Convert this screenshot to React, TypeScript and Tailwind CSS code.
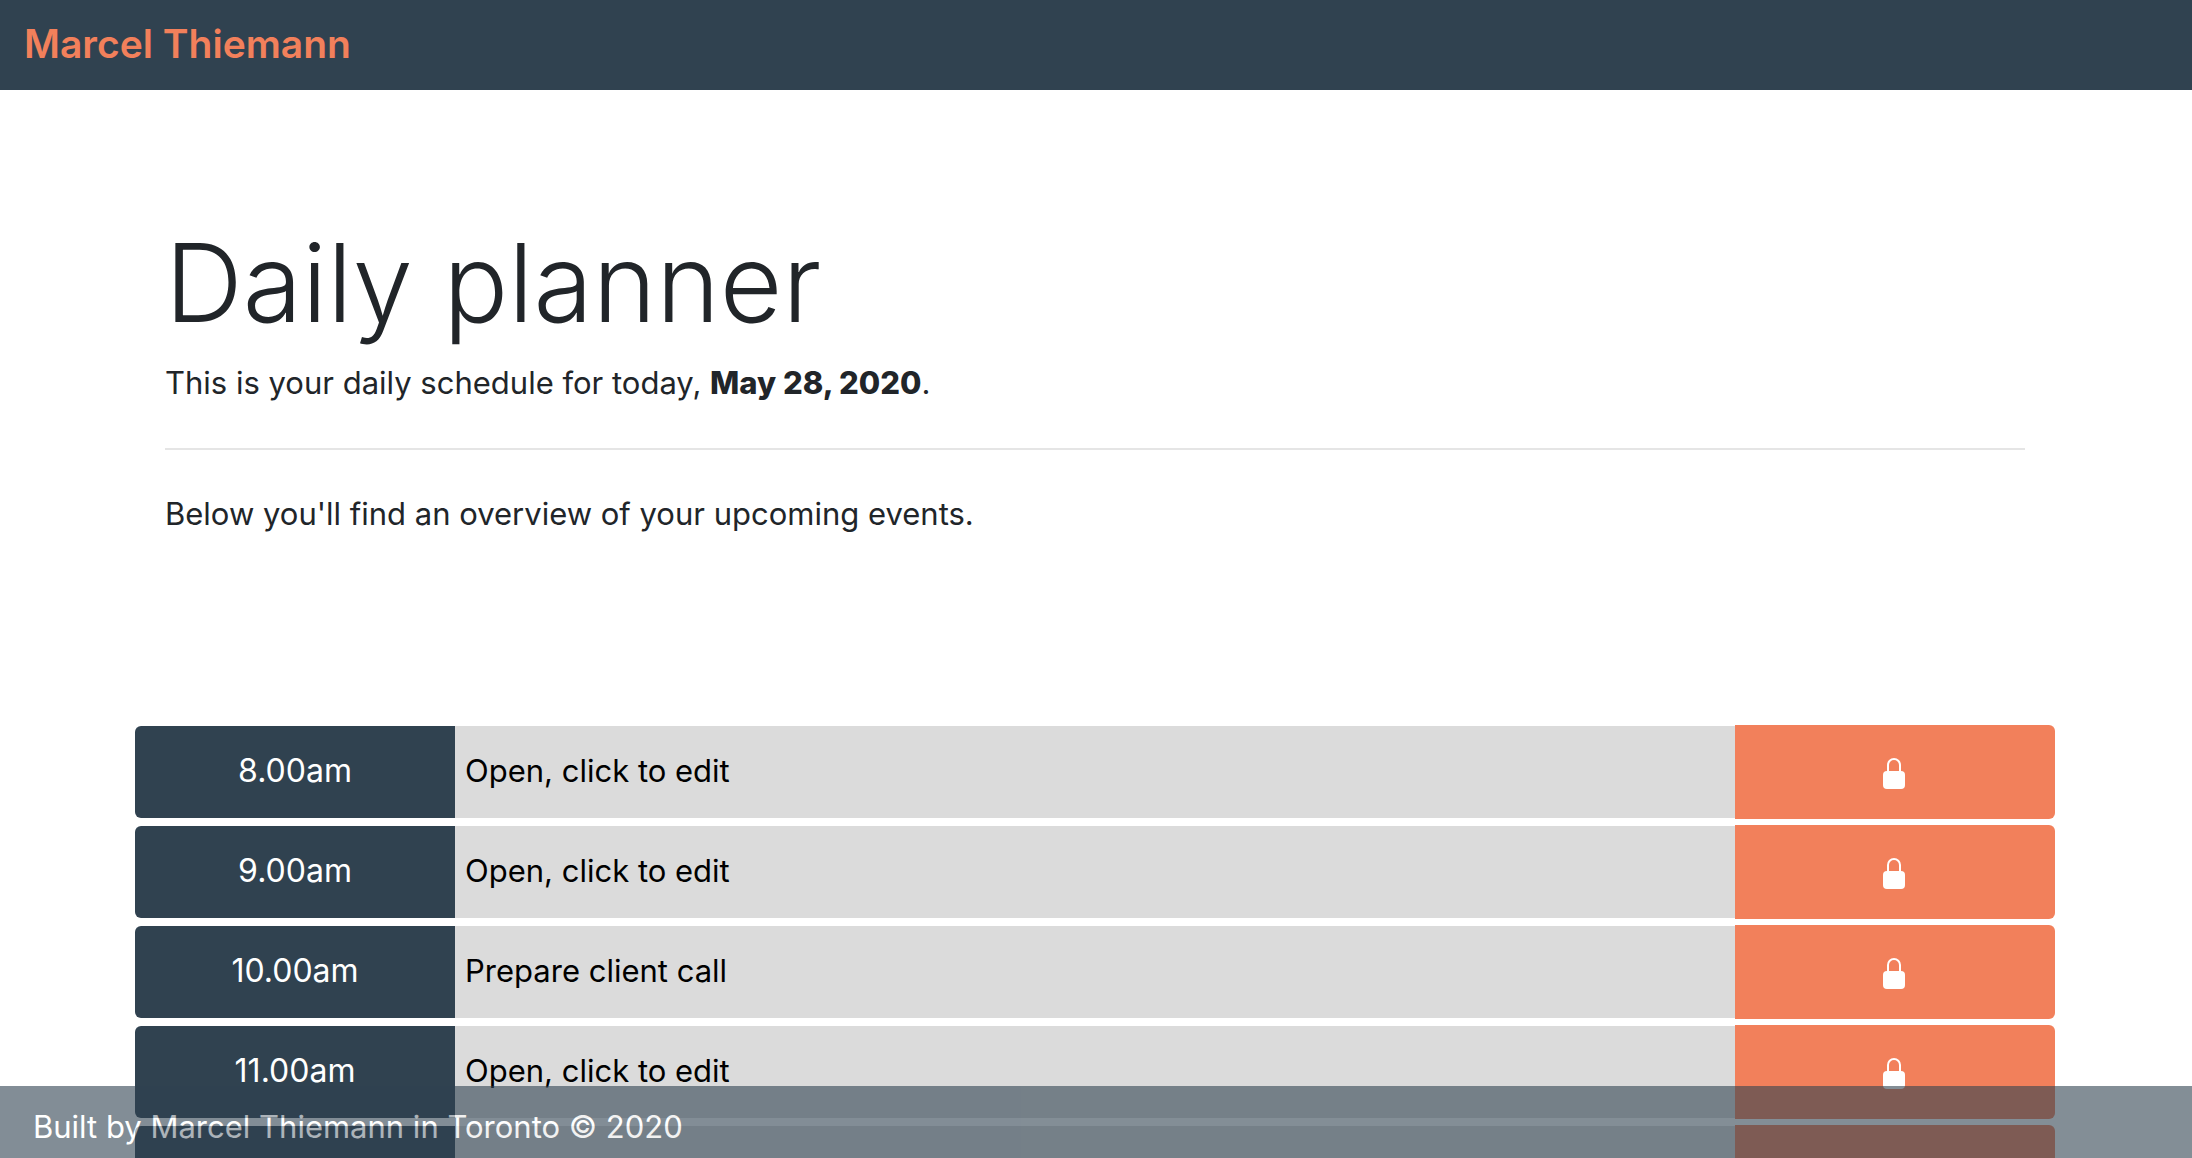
const slots = [
  { time: "8.00am", event: "Open, click to edit" },
  { time: "9.00am", event: "Open, click to edit" },
  { time: "10.00am", event: "Prepare client call" },
  { time: "11.00am", event: "Open, click to edit" },
  { time: "12.00pm", event: "Open, click to edit" },
];

function LockIcon() {
  return (
    <svg className="mt-1 h-8 w-6" viewBox="0 0 24 32" fill="none" aria-hidden="true">
      <path d="M5 15V7a6 6 0 0 1 12 0v8" stroke="white" strokeWidth="2" />
      <rect x="0" y="13" width="22" height="18" rx="4" fill="white" />
    </svg>
  );
}

function TimeSlot({ time, event }: { time: string; event: string }) {
  const id = `slot-${time}`;
  return (
    <div className="grid h-[92px] grid-cols-12">
      <label
        htmlFor={id}
        className="col-span-2 flex items-center justify-center rounded-l-md bg-[#304250] pb-0.5 text-[32px] text-white"
      >
        {time}
      </label>
      <input
        id={id}
        type="text"
        defaultValue={event}
        className="col-span-8 min-w-0 bg-[#dbdbdb] px-2.5 pb-0.5 text-black outline-none"
      />
      <button
        type="button"
        aria-label={`Save ${time}`}
        className="col-span-2 -my-px flex items-center justify-center rounded-r-md bg-[#f2805b]"
      >
        <LockIcon />
      </button>
    </div>
  );
}

export default function App() {
  return (
    <div className="h-screen overflow-hidden bg-white font-['Inter',sans-serif] text-[31px] leading-[48px] text-[#212529]">
      <nav className="flex h-[90px] items-center bg-[#304250] px-6 pb-0.5">
        <a href="#" className="text-[39px] font-semibold text-[#f2805b]">
          Marcel Thiemann
        </a>
      </nav>
      <main className="mx-auto max-w-[1922px] pr-0.5">
        <header className="px-[30px] pt-[126px] pb-[188px]">
          <h1 className="text-[108px] leading-[134px] font-light">Daily planner</h1>
          <p className="mt-[9px]">
            This is your daily schedule for today, <strong className="font-extrabold">May 28, 2020</strong>.
          </p>
          <hr className="mt-[41px] mb-10 border-t-2 border-[#e5e5e5]" />
          <p>Below you'll find an overview of your upcoming events.</p>
        </header>
        <section className="flex flex-col gap-2">
          {slots.map((slot) => (
            <TimeSlot key={slot.time} time={slot.time} event={slot.event} />
          ))}
        </section>
      </main>
      <footer className="fixed inset-x-0 bottom-0 flex h-[72px] items-center bg-[#304250] px-[33px] pt-2.5 text-white opacity-60">
        <p>Built by Marcel Thiemann in Toronto © 2020</p>
      </footer>
    </div>
  );
}
